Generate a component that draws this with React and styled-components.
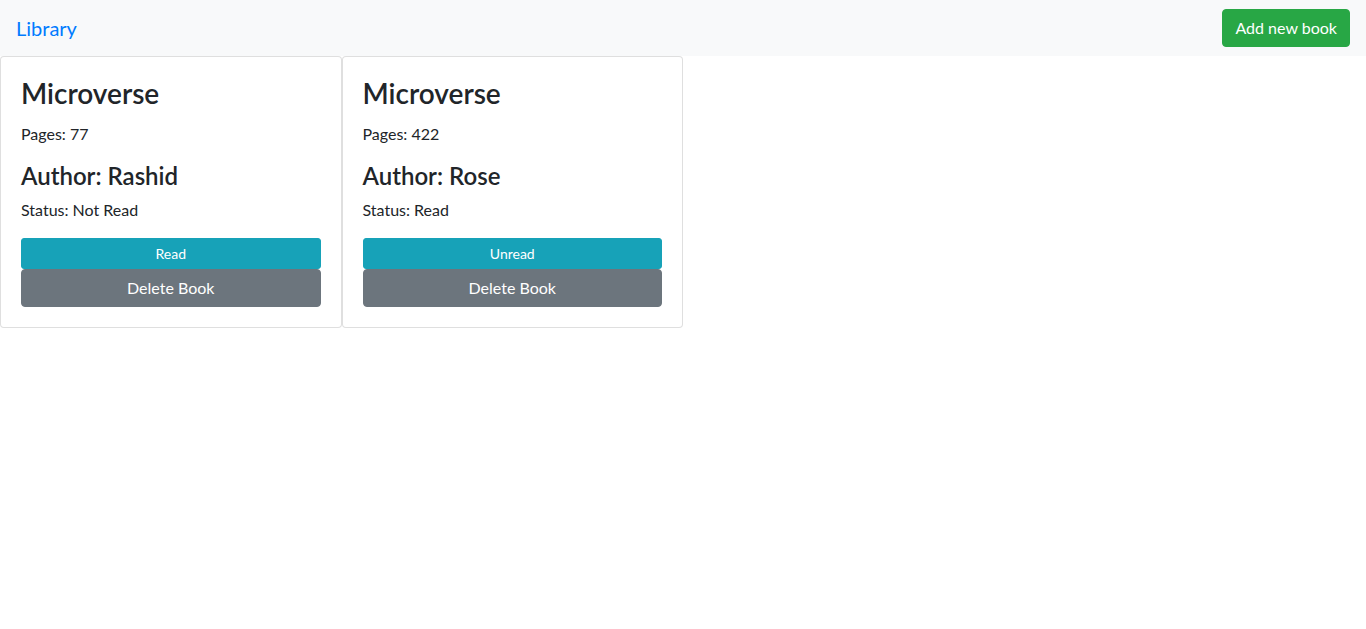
import React from "react";
import styled, { createGlobalStyle } from "styled-components";

const Global = createGlobalStyle`
  * { box-sizing: border-box; }
  body {
    margin: 0;
    font-family: "Segoe UI", Lato, "Open Sans", sans-serif;
    font-size: 16px;
    line-height: 1.5;
    color: #212529;
    background: #fff;
  }
`;

const NavBar = styled.nav`
  display: flex;
  align-items: center;
  justify-content: space-between;
  height: 56px;
  padding: 8px 16px;
  background: #f8f9fa;
`;

const Brand = styled.a`
  font-size: 20px;
  line-height: 30px;
  padding: 5px 0;
  color: #007bff;
  text-decoration: none;
`;

const Button = styled.button`
  display: block;
  font-family: inherit;
  border: 1px solid ${(p) => p.$bg};
  background: ${(p) => p.$bg};
  color: #fff;
  border-radius: ${(p) => (p.$small ? "3px" : "4px")};
  font-size: ${(p) => (p.$small ? "14px" : "16px")};
  line-height: ${(p) => (p.$small ? "21px" : "24px")};
  padding: ${(p) => (p.$small ? "4px 8px" : "6px 12px")};
  width: ${(p) => (p.$block ? "100%" : "auto")};
  text-align: center;
  cursor: pointer;
`;

const Grid = styled.div`
  display: flex;
`;

const Card = styled.div`
  width: 25%;
  border: 1px solid rgba(0, 0, 0, 0.125);
  border-radius: 4px;
  background: #fff;
`;

const CardBody = styled.div`
  padding: 20px;
`;

const Title = styled.h3`
  margin: 0 0 11px;
  font-size: 28px;
  font-weight: 600;
  line-height: 1.2;
`;

const Text = styled.p`
  margin: 0 0 16px;
  font-size: 16px;
  line-height: 24px;
`;

const Author = styled.h4`
  margin: 0 0 8px;
  font-size: 24px;
  font-weight: 600;
  line-height: 1.2;
`;

const books = [
  { title: "Microverse", pages: 77, author: "Rashid", read: false },
  { title: "Microverse", pages: 422, author: "Rose", read: true },
];

export default function App() {
  return (
    <>
      <Global />
      <NavBar>
        <Brand href="#">Library</Brand>
        <Button $bg="#28a745">Add new book</Button>
      </NavBar>
      <Grid>
        {books.map((b, i) => (
          <Card key={i}>
            <CardBody>
              <Title>{b.title}</Title>
              <Text>Pages: {b.pages}</Text>
              <Author>Author: {b.author}</Author>
              <Text>Status: {b.read ? "Read" : "Not Read"}</Text>
              <Button $small $block $bg="#17a2b8">
                {b.read ? "Unread" : "Read"}
              </Button>
              <Button $block $bg="#6c757d">Delete Book</Button>
            </CardBody>
          </Card>
        ))}
      </Grid>
    </>
  );
}
